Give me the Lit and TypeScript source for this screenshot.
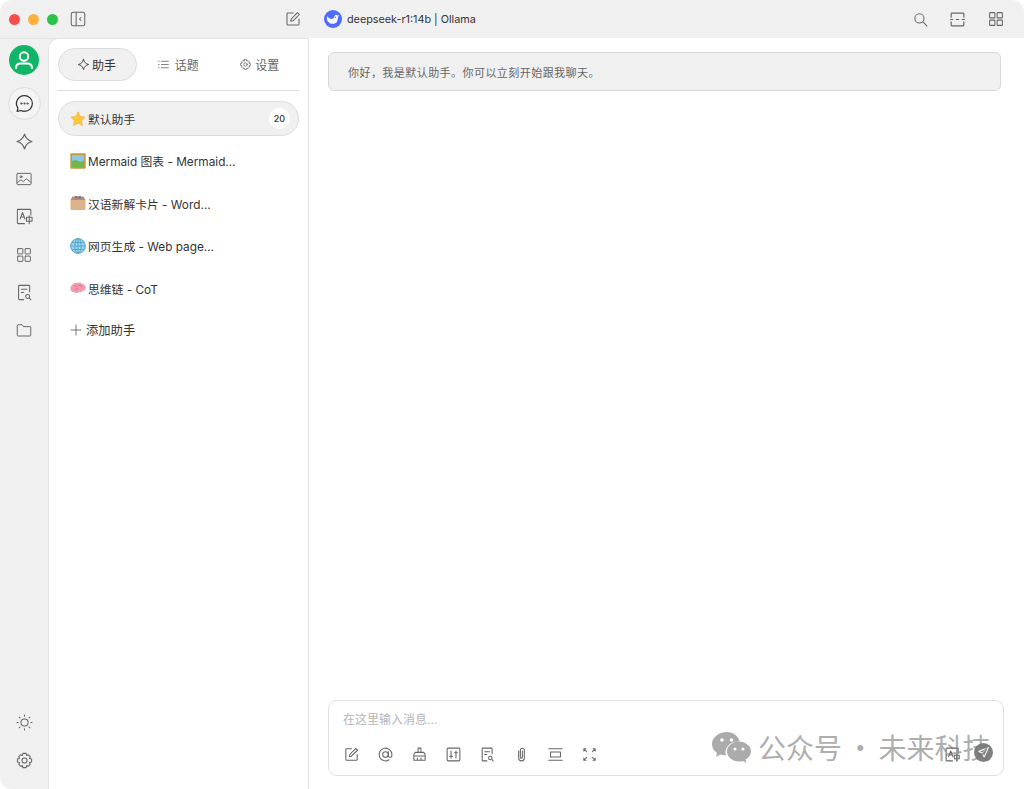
import { LitElement, html, css, svg } from "lit";
import { customElement } from "lit/decorators.js";

const ic = (size: number, body: unknown, sw = 1.3) => html`<svg class="ic" width=${size} height=${size} viewBox="0 0 24 24" fill="none" stroke="currentColor" stroke-width=${sw} stroke-linecap="round" stroke-linejoin="round">${body}</svg>`;

const sparkle = svg`<path d="M12 2.500c1.200 5.300 4.200 8.300 9.500 9.500-5.300 1.200-8.300 4.200-9.500 9.500-1.200-5.300-4.200-8.300-9.500-9.500 5.300-1.200 8.300-4.200 9.500-9.500z"/>`;
const grid = svg`<rect x="3.500" y="3.500" width="7" height="7" rx=".6"/><rect x="13.500" y="3.500" width="7" height="7" rx=".6"/><rect x="3.500" y="13.500" width="7" height="7" rx=".6"/><rect x="13.500" y="13.500" width="7" height="7" rx=".6"/>`;
const gear = svg`<path d="M10 3h4l.7 2.600 2-.9 2.500 2.500-.9 2.300 2.700.7v3.600l-2.700.7.900 2.300-2.500 2.500-2-.9L14 21h-4l-.7-2.600-2 .9-2.500-2.500.9-2.300-2.700-.7v-3.600l2.700-.7-.9-2.300 2.500-2.500 2 .9z"/><circle cx="12" cy="12" r="3.200"/>`;
const docSearch = svg`<path d="M11 21H5.500a1 1 0 0 1-1-1V4a1 1 0 0 1 1-1h12a1 1 0 0 1 1 1v7"/><path d="M8 8h7M8 12h3"/><circle cx="16" cy="17" r="2.500"/><path d="M18 19l2 2"/>`;
const translate = svg`<path d="M20 10V4a1 1 0 0 0-1-1H4a1 1 0 0 0-1 1v16a1 1 0 0 0 1 1h8"/><path d="M6.500 15l3-8 3 8M7.500 12.600h4"/><rect x="14.500" y="13" width="7" height="5" /><path d="M18 11v10"/>`;
const edit = svg`<path d="M12 4H5a1 1 0 0 0-1 1v14a1 1 0 0 0 1 1h14a1 1 0 0 0 1-1v-7"/><path d="M9 15l.6-3L18 3.500l2.500 2.500L12 14.400z"/>`;

const star = html`<svg class="emoji" viewBox="0 0 16 16"><path fill="#ffc83d" stroke="#f3a93a" stroke-width=".6" d="M8 .8l2.200 4.600 5 .7-3.600 3.500.9 5L8 12.200l-4.500 2.400.9-5L.8 6.100l5-.7z"/></svg>`;
const picture = html`<svg class="emoji" viewBox="0 0 16 16"><rect x=".3" y=".3" width="15.400" height="15.400" rx="1" fill="#c9973f"/><rect x="2" y="2" width="12" height="12" fill="#8cc8e4"/><path fill="#6cb64a" d="M2 8.500c3-2 5-1 7 0s3 0 5-1V14H2z"/></svg>`;
const box = html`<svg class="emoji" viewBox="0 0 16 16"><path fill="#dcb38a" d="M.5 5h15v9a1 1 0 0 1-1 1h-13a1 1 0 0 1-1-1z"/><path fill="#b68f70" d="M2.500 1.500h11L15.500 5H.5z"/><rect x="5" y="1" width="2.500" height="2.500" fill="#b05a7a"/><rect x="8.500" y="1" width="2.500" height="2.500" fill="#5a7ab0"/></svg>`;
const globe = html`<svg class="emoji" viewBox="0 0 16 16"><circle cx="8" cy="8" r="7.800" fill="#9ad6ea"/><g fill="none" stroke="#4a9cc8" stroke-width=".8"><circle cx="8" cy="8" r="7.300"/><ellipse cx="8" cy="8" rx="3.200" ry="7.300"/><path d="M.8 8h14.400M2 4.500h12M2 11.500h12M8 1v14"/></g></svg>`;
const brain = html`<svg class="emoji" viewBox="0 0 16 16"><path fill="#f29bb0" d="M.5 9.500C0 6 2.500 3.300 6.500 2.800c4.300-.6 8.700 1 9.200 4.700.3 2.200-1.500 3.500-3.500 3.500-.5 1.500-2 1.500-3 .8-1.500 1.800-3.500 1.800-4.300.4C2.800 12.500.8 11.500.5 9.500z"/><path fill="none" stroke="#d0607e" stroke-width=".7" d="M4 6c1.500-1 2.500 0 3 1M8 4.500c1 1.500 3 1 4 2M5 9.500c1-1 2.500-1 3.500 0"/></svg>`;

@customElement("app-root")
export class AppRoot extends LitElement {
  static styles = css`
    :host { display: block; width: 1024px; height: 789px; font-family: Inter, "Noto Sans CJK SC", sans-serif; color: #333; background: #fff; overflow: hidden; position: relative; }
    .window { width: 1024px; height: 789px; display: flex; flex-direction: column; background: #f0f0f0; border-radius: 12px 12px 0 12px; overflow: hidden; }
    .ic { display: block; flex: none; color: #666; }
    .titlebar { height: 38px; flex: none; display: flex; align-items: center; border-bottom: 1px solid #e2e2e2; box-sizing: content-box; }
    .tb-left { width: 308px; flex: none; display: flex; align-items: center; padding-left: 9px; box-sizing: border-box; gap: 8px; }
    .dot { width: 11px; height: 11px; border-radius: 50%; flex: none; }
    .toggle { margin-left: 3px; }
    .new { margin-left: auto; margin-right: 6px; }
    .tb-main { flex: 1; display: flex; align-items: center; padding-left: 16px; padding-right: 19px; }
    .logo { width: 18px; height: 18px; border-radius: 50%; background: #4d6bfe; display: flex; align-items: center; justify-content: center; flex: none; }
    .model { font-size: 10.800px; margin-left: 5px; color: #333; }
    .tb-right { margin-left: auto; display: flex; align-items: center; gap: 20px; }
    .tb-right .ic:first-child { margin-right: -1px; }
    .body { flex: 1; display: flex; min-height: 0; margin-top: -1px; }
    .rail { width: 48px; flex: none; display: flex; flex-direction: column; align-items: center; padding-top: 7px; padding-bottom: 12px; box-sizing: border-box; }
    .avatar { width: 30px; height: 30px; border-radius: 50%; background: #10b568; display: flex; align-items: center; justify-content: center; color: #fff; }
    .avatar .ic { color: #fff; }
    .rail-btn { width: 33px; height: 33px; display: flex; align-items: center; justify-content: center; border-radius: 50%; margin-top: 4.800px; border: 1px solid transparent; box-sizing: border-box; }
    .rail-btn.active { border-color: #dcdcdc; background: #f4f4f4; margin-top: 12px; }
    .rail-btn.active .ic { color: #333; }
    .spacer { flex: 1; }
    .panel { width: 261px; flex: none; background: #fff; border-radius: 10px 0 0 0; border: 1px solid #e4e4e4; border-bottom: none; padding: 9px 9px 0 9px; box-sizing: border-box; display: flex; flex-direction: column; }
    .tabs { display: flex; align-items: center; height: 33px; flex: none; font-size: 12px; color: #666; }
    .tab { flex: 1; display: flex; align-items: center; justify-content: center; gap: 1px; height: 33px; box-sizing: border-box; }
    .tab.on { flex: none; width: 79px; border: 1px solid #dcdcdc; border-radius: 17px; background: #f0f0f0; color: #333; margin-right: 1px; padding-right: 2px; }
    .tab.on .ic { color: #444; margin-right: 1px; }
    .tabs .t2 { padding-right: 2px; gap: 5px; }
    .tabs .t3 { gap: 3px; }
    .rule { height: 1px; background: #dedede; margin-top: 9px; margin-bottom: 10px; flex: none; }
    .items { display: flex; flex-direction: column; gap: 7.400px; }
    .item { height: 35px; display: flex; align-items: center; padding: 0 11px; box-sizing: border-box; font-size: 11.800px; gap: 2px; border: 1px solid transparent; border-radius: 18px; color: #333; }
    .item.on { background: #f0f0f0; border-color: #dcdcdc; padding-right: 8px; }
    .emoji { width: 16px; height: 16px; flex: none; display: block; }
    .badge { margin-left: auto; width: 21px; height: 21px; border-radius: 50%; background: #fff; font-size: 9px; display: flex; align-items: center; justify-content: center; font-weight: 500; }
    .item.add { gap: 4px; font-size: 12.300px; }
    .add .ic { color: #555; }
    .main { flex: 1; background: #fff; display: flex; flex-direction: column; padding: 14px 20px 13px 19px; box-sizing: border-box; min-width: 0; }
    .notice { height: 39px; width: 673px; box-sizing: border-box; border: 1px solid #d8d8d8; border-radius: 6px; background: #f0f0f0; display: flex; align-items: center; padding-left: 19px; font-size: 11px; color: #666; letter-spacing: .45px; flex: none; }
    .input { margin-top: auto; height: 76px; box-sizing: border-box; border: 1px solid #e0e0e0; border-radius: 9px; padding: 10px 14px 0 14px; display: flex; flex-direction: column; }
    .ph { font-size: 12px; color: #b5b5b5; line-height: 17px; }
    .tools { display: flex; align-items: center; margin-top: 17px; gap: 17px; height: 18px; }
    .tools .right { margin-left: auto; display: flex; align-items: center; gap: 13px; margin-right: -4px; }
    .send { width: 19px; height: 19px; border-radius: 50%; background: #808080; display: flex; align-items: center; justify-content: center; margin-top: -4px; }
    .send .ic { color: #fff; }
    .wm { position: absolute; left: 712px; top: 728px; display: flex; align-items: center; gap: 7px; color: rgba(120,120,120,.62); font-size: 28px; line-height: 38px; white-space: nowrap; word-spacing: -2px; font-family: "Noto Sans CJK SC", sans-serif; pointer-events: none; }
    .wm svg { display: block; flex: none; }
  `;

  render() {
    return html`
      <div class="window">
        <div class="titlebar">
          <div class="tb-left">
            <span class="dot" style="background:#f2504d"></span>
            <span class="dot" style="background:#fdb03c"></span>
            <span class="dot" style="background:#2dc24b"></span>
            <span class="toggle">${ic(18, svg`<rect x="3" y="3" width="18" height="18" rx="2.500"/><path d="M9.500 3v18M16 10l-2 2 2 2"/>`, 1.4)}</span>
            <span class="new">${ic(18, edit, 1.4)}</span>
          </div>
          <div class="tb-main">
            <span class="logo"><svg width="14" height="14" viewBox="0 0 16 16"><path fill="#fff" d="M15.500 3.500c-.7.500-1.300.6-2 .4C12 2.500 10.500 3 9.800 4.500 9 6.500 8.500 8.500 6 8 4 7.600 2.500 6 1.300 4.500.5 8 1.500 11 4 12.500c3 1.800 7 1 8.500-1.500 1-1.800.8-4.500 1.500-6 .5-.3 1-.8 1.500-1.500z"/><circle cx="11" cy="6" r=".8" fill="#4d6bfe"/></svg></span>
            <span class="model">deepseek-r1:14b | Ollama</span>
            <div class="tb-right">
              ${ic(17, svg`<circle cx="10.500" cy="10.500" r="6.500"/><path d="M15.500 15.500L21 21"/>`, 1.5)}
              ${ic(19, svg`<path d="M4 9V5a1 1 0 0 1 1-1h14a1 1 0 0 1 1 1v4M4 15v4a1 1 0 0 0 1 1h14a1 1 0 0 0 1-1v-4M3 12h3M10.500 12h3M18 12h3"/>`, 1.500)}
              ${ic(18, grid, 1.4)}
            </div>
          </div>
        </div>
        <div class="body">
          <div class="rail">
            <div class="avatar">${ic(24, svg`<circle cx="12" cy="8.500" r="4.200"/><path d="M4 20c0-3 2-4.500 4.500-4.500h7c2.500 0 4.500 1.500 4.500 4.500"/>`, 2)}</div>
            <div class="rail-btn active">${ic(21, svg`<path d="M12 3a9 9 0 0 1 0 18c-1.500 0-3-.4-4.200-1L3.500 21l1-3.800A9 9 0 0 1 12 3z"/><circle cx="8.500" cy="12" r=".5"/><circle cx="12" cy="12" r=".5"/><circle cx="15.500" cy="12" r=".5"/>`, 1.4)}</div>
            <div class="rail-btn">${ic(19, sparkle, 1.4)}</div>
            <div class="rail-btn">${ic(18, svg`<rect x="2.500" y="4.500" width="19" height="15" rx="1"/><circle cx="8" cy="9" r="1.300"/><path d="M3 17l5-4 3 2.500 4-4 6 5"/>`)}</div>
            <div class="rail-btn">${ic(19, translate)}</div>
            <div class="rail-btn">${ic(18, grid)}</div>
            <div class="rail-btn">${ic(19, docSearch)}</div>
            <div class="rail-btn">${ic(18, svg`<path d="M3 6a1 1 0 0 1 1-1h5.500l2 2.500H20a1 1 0 0 1 1 1V19a1 1 0 0 1-1 1H4a1 1 0 0 1-1-1z"/>`)}</div>
            <div class="spacer"></div>
            <div class="rail-btn">${ic(19, svg`<circle cx="12" cy="12" r="4.500"/><path d="M12 2.500v1.500M12 20v1.500M2.500 12H4M20 12h1.500M5.300 5.300l1 1M17.700 17.700l1 1M5.300 18.700l1-1M17.700 6.300l1-1"/>`)}</div>
            <div class="rail-btn">${ic(19, gear)}</div>
          </div>
          <div class="panel">
            <div class="tabs">
              <div class="tab on">${ic(13, sparkle, 1.8)}<span>助手</span></div>
              <div class="tab t2">${ic(13, svg`<path d="M8 6h13M8 12h13M8 18h13M3 6h1M3 12h1M3 18h1"/>`, 1.5)}<span>话题</span></div>
              <div class="tab t3">${ic(13, gear, 1.5)}<span>设置</span></div>
            </div>
            <div class="rule"></div>
            <div class="items">
              <div class="item on">${star}<span>默认助手</span><span class="badge">20</span></div>
              <div class="item">${picture}<span>Mermaid 图表 - Mermaid…</span></div>
              <div class="item">${box}<span>汉语新解卡片 - Word…</span></div>
              <div class="item">${globe}<span>网页生成 - Web page…</span></div>
              <div class="item">${brain}<span>思维链 - CoT</span></div>
              <div class="item add">${ic(12, svg`<path d="M12 2v20M2 12h20"/>`, 1.6)}<span>添加助手</span></div>
            </div>
          </div>
          <div class="main">
            <div class="notice">你好，我是默认助手。你可以立刻开始跟我聊天。</div>
            <div class="input">
              <div class="ph">在这里输入消息...</div>
              <div class="tools">
                ${ic(17, edit, 1.5)}
                ${ic(17, svg`<circle cx="12" cy="12" r="4"/><path d="M16 8v5.500a2.500 2.500 0 0 0 5 0V12a9 9 0 1 0-4 7.500"/>`, 1.5)}
                ${ic(17, svg`<path d="M10 3h4v6h-4zM6 9h12l2 3v8H4v-8zM4 14h16M9 20v-3M14 20v-3"/>`, 1.5)}
                ${ic(17, svg`<rect x="3" y="3" width="18" height="18" rx="1.500"/><path d="M8.500 7v10M15.500 7v10M6.500 14.500h4M13.500 9.500h4"/>`, 1.5)}
                ${ic(17, docSearch, 1.5)}
                ${ic(17, svg`<path d="M8 7v10a4 4 0 0 0 8 0V6a2.800 2.800 0 0 0-5.600 0v10a1.400 1.400 0 0 0 2.800 0V7"/>`, 1.5)}
                ${ic(17, svg`<path d="M2.500 4h19M2.500 20h19"/><rect x="5" y="8.500" width="14" height="7"/>`, 1.5)}
                ${ic(17, svg`<path d="M4 4l4 4M20 4l-4 4M4 20l4-4M20 20l-4-4M4 4h3M4 4v3M20 4h-3M20 4v3M4 20h3M4 20v-3M20 20h-3M20 20v-3"/>`, 1.5)}
                <div class="right">
                  ${ic(17, translate, 1.5)}
                  <span class="send">${ic(13, svg`<path d="M21 3L3 10l7 3 3 8zM10 13l5-5"/>`, 2)}</span>
                </div>
              </div>
            </div>
          </div>
        </div>
      </div>
      <div class="wm">
        <svg width="39" height="32" viewBox="0 0 39 32"><g fill="rgba(120,120,120,.62)"><path d="M15 1C7 1 0 6 0 13c0 4 2 7 5 9l-1 4 4.500-2.500c2 .6 4 .9 5.500.9-.3-1-.5-2-.5-3 0-6.500 6-11 13-11h1C26.500 5 21 1 15 1z"/><path d="M39 20.500c0-5.500-5.500-10-12-10s-12 4.500-12 10 5.500 10 12 10c1.500 0 3-.2 4-.6l3.500 2-.9-3.300c3.400-2 5.400-4.800 5.400-8.100z"/></g><g fill="#fff"><circle cx="10" cy="9" r="1.800"/><circle cx="19.500" cy="9" r="1.800"/><circle cx="23" cy="18" r="1.500"/><circle cx="31" cy="18" r="1.500"/></g></svg>
        <span>公众号 · 未来科技</span>
      </div>
    `;
  }
}
